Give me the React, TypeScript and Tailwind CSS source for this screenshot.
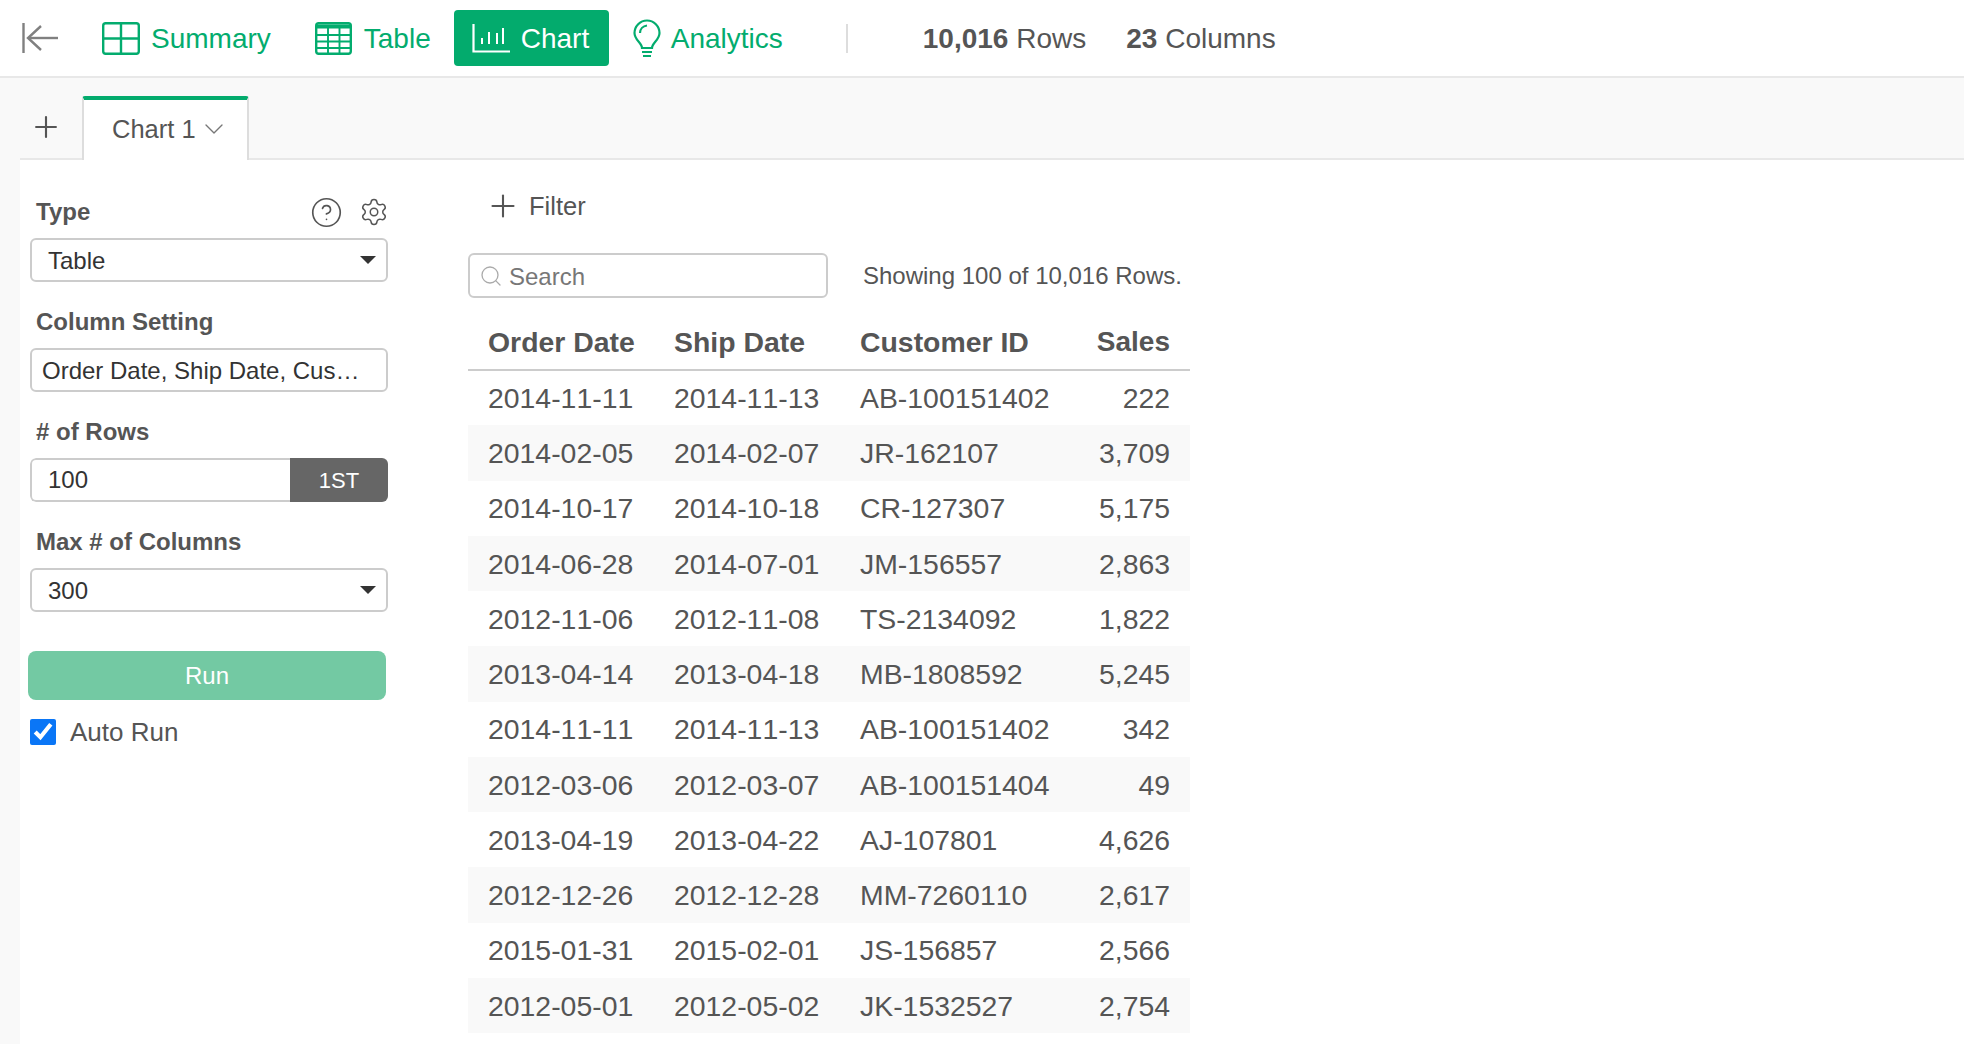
import { ChevronDown, CircleHelp, Plus, Search, Settings } from 'lucide-react';

const rows = [
  ['2014-11-11', '2014-11-13', 'AB-100151402', '222'],
  ['2014-02-05', '2014-02-07', 'JR-162107', '3,709'],
  ['2014-10-17', '2014-10-18', 'CR-127307', '5,175'],
  ['2014-06-28', '2014-07-01', 'JM-156557', '2,863'],
  ['2012-11-06', '2012-11-08', 'TS-2134092', '1,822'],
  ['2013-04-14', '2013-04-18', 'MB-1808592', '5,245'],
  ['2014-11-11', '2014-11-13', 'AB-100151402', '342'],
  ['2012-03-06', '2012-03-07', 'AB-100151404', '49'],
  ['2013-04-19', '2013-04-22', 'AJ-107801', '4,626'],
  ['2012-12-26', '2012-12-28', 'MM-7260110', '2,617'],
  ['2015-01-31', '2015-02-01', 'JS-156857', '2,566'],
  ['2012-05-01', '2012-05-02', 'JK-1532527', '2,754'],
];

const BackIcon = () => (
  <svg width="36" height="32" viewBox="0 0 36 32" fill="none" stroke="#808080" strokeWidth="2.4">
    <path d="M1.5 1v30" />
    <path d="M36 16H6" />
    <path d="M19 4 6 16l13 12" />
  </svg>
);

const SummaryIcon = () => (
  <svg width="38" height="33" viewBox="0 0 38 33" fill="none" stroke="#03ac6e" strokeWidth="2.4">
    <rect x="1.2" y="1.2" width="35.6" height="30.6" rx="2.5" />
    <path d="M19 1v31M1 16.5h36" />
  </svg>
);

const TableIcon = () => (
  <svg width="37" height="33" viewBox="0 0 37 33" fill="none" stroke="#03ac6e" strokeWidth="2">
    <rect x="1.2" y="1.2" width="34.6" height="30.6" rx="2.5" strokeWidth="2.4" />
    <path d="M1 4.500h35" strokeWidth="4" />
    <path d="M1 13h35M1 19.500h35M1 26h35M13 6v26M24.500 6v26" strokeWidth="1.900" />
  </svg>
);

const ChartIcon = () => (
  <svg width="38" height="29" viewBox="0 0 38 29" fill="none" stroke="#fff" strokeWidth="2">
    <path d="M1.500 0v27.500H38" strokeWidth="2.200" />
    <path d="M10 14v6M17 8v12M25 9v11M31 4v16" />
  </svg>
);

const BulbIcon = () => (
  <svg width="28" height="39" viewBox="0 0 28 39" fill="none" stroke="#03ac6e" strokeWidth="2.200">
    <path d="M9 29c0-5-7.500-8-7.500-15a12.500 12.500 0 0 1 25 0c0 7-7.500 10-7.500 15z" />
    <path d="M7 14c0-4 3-7 7-7.500" />
    <path d="M9 33h10M10 37h8" />
  </svg>
);

const Caret = () => (
  <svg width="16" height="8" viewBox="0 0 16 8" className="ml-auto">
    <path d="M0 0h16L8 8z" fill="#333" />
  </svg>
);

const Field = ({ label, children }: { label: string; children: React.ReactNode }) => (
  <div className="mt-[25px]">
    <div className="mb-[11px] h-[30px] pl-[6px] text-[24px] leading-[30px] font-bold text-[#555]">{label}</div>
    {children}
  </div>
);

const SelectBox = ({ value }: { value: string }) => (
  <div className="flex h-[44px] items-center rounded-md border-2 border-[#ccc] bg-white pr-[10px] pl-[16px] text-[24px] text-[#333]">
    <span className="pt-[1px]">{value}</span>
    <Caret />
  </div>
);

export default function App() {
  return (
    <div className="h-screen overflow-hidden bg-white font-['Liberation_Sans',Arial,sans-serif] text-[#555]">
      {/* Top bar */}
      <header className="flex h-[78px] items-center border-b-2 border-[#e8e8e8] text-[28px]">
        <div className="ml-[22px]">
          <BackIcon />
        </div>
        <div className="ml-[44px] flex items-center gap-[11px] text-[#03ac6e]">
          <SummaryIcon />
          <span className="pt-[2px]">Summary</span>
        </div>
        <div className="ml-[44px] flex items-center gap-[12px] text-[#03ac6e]">
          <TableIcon />
          <span className="pt-[2px]">Table</span>
        </div>
        <div className="ml-[23px] flex h-[56px] w-[155px] items-center gap-[11px] rounded-[4px] bg-[#03ab6d] pl-[18px] text-white">
          <ChartIcon />
          <span className="pt-[2px]">Chart</span>
        </div>
        <div className="ml-[24px] flex items-center gap-[10px] text-[#03ac6e]">
          <BulbIcon />
          <span className="pt-[2px]">Analytics</span>
        </div>
        <div className="ml-[63px] h-[29px] w-[2px] bg-[#ddd]" />
        <div className="ml-[75px] pt-[2px]">
          <b>10,016</b> Rows
        </div>
        <div className="ml-[40px] pt-[2px]">
          <b>23</b> Columns
        </div>
      </header>

      {/* Tab bar */}
      <div className="flex h-[82px] bg-[#f9f9f9] pl-[20px]">
        <div className="flex flex-1 items-end border-b-2 border-[#e8e8e8]">
          <div className="mb-[14px] ml-[9px] w-[53px]">
            <Plus size={34} strokeWidth={1.5} color="#555" />
          </div>
          <div className="-mb-[2px] flex h-[64px] w-[167px] items-center rounded-t-[3px] border-x-2 border-t-4 border-r-[#ddd] border-l-[#ddd] border-t-[#03ab6d] bg-white pb-[2px] pl-[28px] text-[25.5px]">
            Chart 1
            <ChevronDown size={32} strokeWidth={1} color="#777" className="ml-[2px]" />
          </div>
        </div>
      </div>

      <div className="flex">
        <div className="h-[884px] w-[20px] bg-[#f9f9f9]" />

        {/* Settings column */}
        <aside className="w-[448px] pt-[12px] pl-[10px]">
          <div className="w-[358px]">
            <div className="mt-[25px]">
              <div className="mb-[11px] flex h-[30px] items-center pl-[6px] text-[24px] font-bold">
                Type
                <CircleHelp size={33} strokeWidth={1.2} className="mr-[16px] ml-auto" />
                <Settings size={30} strokeWidth={1.2} className="-mr-[1px]" />
              </div>
              <SelectBox value="Table" />
            </div>
            <Field label="Column Setting">
              <div className="flex h-[44px] items-center rounded-md border-2 border-[#ccc] bg-white pl-[10px] text-[24px] text-[#333]">
                <span className="pt-[1px]">Order Date, Ship Date, Cus…</span>
              </div>
            </Field>
            <Field label="# of Rows">
              <div className="flex h-[44px] overflow-hidden rounded-md text-[24px]">
                <div className="flex w-[260px] items-center rounded-l-md border-y-2 border-l-2 border-[#ccc] pl-[16px] text-[#333]">
                  100
                </div>
                <div className="flex flex-1 items-center justify-center bg-[#666] text-[22px] text-white">1ST</div>
              </div>
            </Field>
            <Field label="Max # of Columns">
              <SelectBox value="300" />
            </Field>
            <button className="mt-[39px] -ml-[2px] block h-[49px] w-[358px] rounded-lg bg-[#73c9a3] pt-[1px] text-[24px] text-white">
              Run
            </button>
            <label className="mt-[19px] flex h-[26px] items-center gap-[14px] text-[26px]">
              <input type="checkbox" defaultChecked className="h-[26px] w-[26px] accent-[#0a76f6]" />
              Auto Run
            </label>
          </div>
        </aside>

        {/* Table area */}
        <main className="pt-[31px]">
          <div className="flex h-[30px] items-center pl-[17px] text-[25.5px]">
            <Plus size={36} strokeWidth={1.4} color="#555" />
            <span className="ml-[8px]">Filter</span>
          </div>
          <div className="mt-[32px] flex items-center">
            <div className="flex h-[45px] w-[360px] items-center gap-[6px] rounded-md border-2 border-[#ccc] pl-[9px]">
              <Search size={24} strokeWidth={1.3} color="#aaa" />
              <input placeholder="Search" className="w-[280px] pt-[2px] text-[24px] outline-none placeholder:text-[#777]" />
            </div>
            <div className="ml-[35px] pt-[1px] text-[24px]">Showing 100 of 10,016 Rows.</div>
          </div>
          <table className="mt-[17px] w-[722px] table-fixed text-[28.4px] whitespace-nowrap [font-kerning:none]">
            <colgroup>
              <col className="w-[186px]" />
              <col className="w-[186px]" />
              <col className="w-[186px]" />
              <col />
            </colgroup>
            <thead>
              <tr className="h-[55px] border-b-2 border-[#ccc] font-bold">
                <th className="pl-[20px] text-left">Order Date</th>
                <th className="pl-[20px] text-left">Ship Date</th>
                <th className="pl-[20px] text-left">Customer ID</th>
                <th className="pr-[20px] text-right text-[28px]">Sales</th>
              </tr>
            </thead>
            <tbody>
              {rows.map((row, i) => (
                <tr key={i} className={`h-[55.25px] ${i % 2 === 1 ? 'bg-[#f9f9f9]' : ''}`}>
                  <td className="pt-[1px] pl-[20px]">{row[0]}</td>
                  <td className="pt-[1px] pl-[20px]">{row[1]}</td>
                  <td className="pt-[1px] pl-[20px]">{row[2]}</td>
                  <td className="pt-[1px] pr-[20px] text-right">{row[3]}</td>
                </tr>
              ))}
            </tbody>
          </table>
        </main>
      </div>
    </div>
  );
}
